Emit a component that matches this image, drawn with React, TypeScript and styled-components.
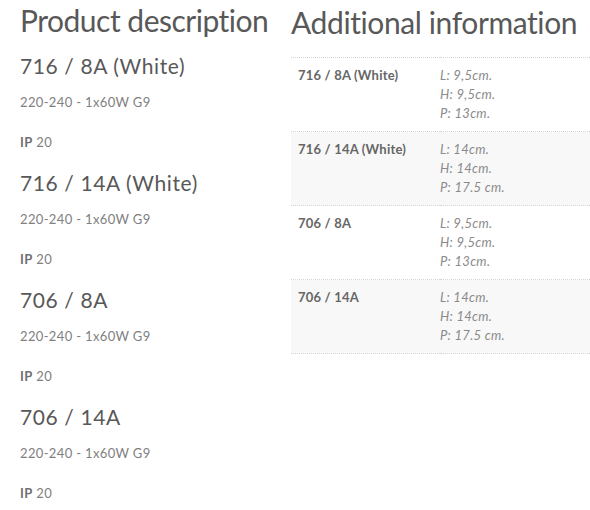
import React from "react";
import styled, { createGlobalStyle } from "styled-components";

const GlobalStyle = createGlobalStyle`
  html, body {
    margin: 0;
    padding: 0;
    background: #ffffff;
  }
  body {
    font-family: Lato, "Open Sans", sans-serif;
    color: #777777;
  }
`;

const Page = styled.div`
  display: grid;
  grid-template-columns: 271px 1fr;
  padding: 2px 0 0 20px;
  width: 590px;
  box-sizing: border-box;
  overflow: hidden;
`;

const Column = styled.section<{ $offset?: number }>`
  display: flex;
  flex-direction: column;
  padding-top: ${(p) => p.$offset ?? 0}px;
  min-width: 0;
`;

const Title = styled.h2<{ $gap: number; $spacing: number }>`
  margin: 0 0 ${(p) => p.$gap}px;
  font-family: Lato, "Open Sans", sans-serif;
  font-weight: 400;
  font-size: 30px;
  line-height: 36px;
  letter-spacing: ${(p) => p.$spacing}px;
  color: #585858;
  white-space: nowrap;
`;

const Product = styled.article`
  display: flex;
  flex-direction: column;
  margin-bottom: 18px;
`;

const ProductName = styled.h3`
  margin: 0 0 14px;
  font-family: Lato, "Open Sans", sans-serif;
  font-weight: 400;
  font-size: 21px;
  line-height: 25px;
  letter-spacing: 0.6px;
  color: #585858;
`;

const Spec = styled.p<{ $gap: number }>`
  margin: 0 0 ${(p) => p.$gap}px;
  font-size: 13px;
  line-height: 20px;
  letter-spacing: 0.35px;
  color: #808080;
`;

const Strong = styled.strong`
  font-weight: 700;
  color: #707070;
`;

const InfoTable = styled.table`
  border-collapse: collapse;
  table-layout: fixed;
  width: 299px;
  border-bottom: 1px dotted #d6d6d6;
`;

const Row = styled.tr<{ $shaded: boolean }>`
  background: ${(p) => (p.$shaded ? "#f8f8f8" : "transparent")};
  border-top: 1px dotted #d6d6d6;
`;

const Label = styled.th`
  width: 135px;
  padding: 8px 7px;
  text-align: left;
  vertical-align: top;
  font-size: 13px;
  line-height: 19px;
  font-weight: 700;
  letter-spacing: 0.2px;
  color: #666666;
`;

const Value = styled.td`
  padding: 8px 0;
  vertical-align: top;
  font-size: 13px;
  line-height: 19px;
  font-style: italic;
  letter-spacing: 0.3px;
  color: #8a8a8a;
`;

const products = [
  "716 / 8A (White)",
  "716 / 14A (White)",
  "706 / 8A",
  "706 / 14A",
];

const dims = [
  { name: "716 / 8A (White)", lines: ["L: 9,5cm.", "H: 9,5cm.", "P: 13cm."] },
  { name: "716 / 14A (White)", lines: ["L: 14cm.", "H: 14cm.", "P: 17.5 cm."] },
  { name: "706 / 8A", lines: ["L: 9,5cm.", "H: 9,5cm.", "P: 13cm."] },
  { name: "706 / 14A", lines: ["L: 14cm.", "H: 14cm.", "P: 17.5 cm."] },
];

export default function App() {
  return (
    <>
      <GlobalStyle />
      <Page>
        <Column>
          <Title $gap={15} $spacing={-0.5}>Product description</Title>
          {products.map((p) => (
            <Product key={p}>
              <ProductName>{p}</ProductName>
              <Spec $gap={20}>220-240 - 1x60W G9</Spec>
              <Spec $gap={0}>
                <Strong>IP</Strong> 20
              </Spec>
            </Product>
          ))}
        </Column>
        <Column $offset={2}>
          <Title $gap={17} $spacing={-0.4}>Additional information</Title>
          <InfoTable>
            <tbody>
              {dims.map((d, i) => (
                <Row key={d.name} $shaded={i % 2 === 1}>
                  <Label>{d.name}</Label>
                  <Value>
                    {d.lines.map((l) => (
                      <div key={l}>{l}</div>
                    ))}
                  </Value>
                </Row>
              ))}
            </tbody>
          </InfoTable>
        </Column>
      </Page>
    </>
  );
}
